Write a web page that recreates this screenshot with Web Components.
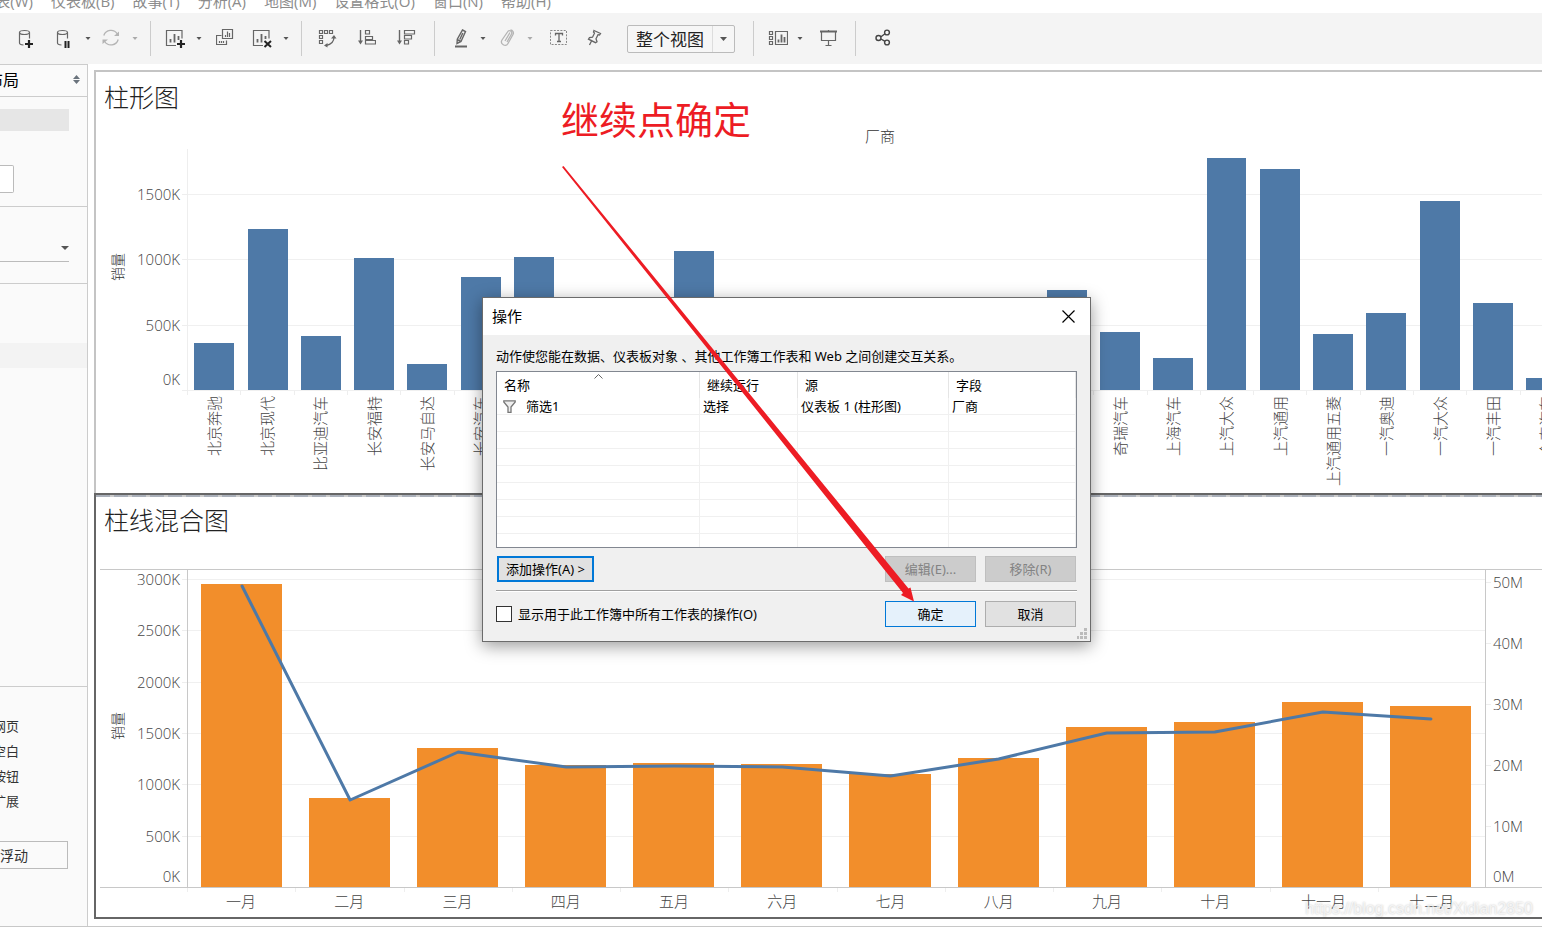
<!DOCTYPE html>
<html lang="zh-CN">
<head>
<meta charset="utf-8">
<title>仪表板 1</title>
<style>
html, body { margin: 0; height: 100%; overflow: hidden; background: #fff; }
body { font-family: "Open Sans", "Noto Sans CJK SC", sans-serif; color: #000; }
</style>
</head>
<body>
<app-window></app-window>
<script>
const define = (name, html, setup) => {
  const tpl = document.createElement('template');
  tpl.innerHTML = html;
  customElements.define(name, class extends HTMLElement {
    connectedCallback() {
      if (this.shadowRoot) return;
      this.attachShadow({ mode: 'open' }).appendChild(tpl.content.cloneNode(true));
      if (setup) setup(this, this.shadowRoot);
    }
  });
};

const CYL = '<g fill="none" stroke="#666" stroke-width="1.200"><ellipse cx="8.500" cy="4.500" rx="5" ry="2"/><path d="M3.500 4.500v10.500q0 1.800 4 2M13.500 4.500v6"/></g>';
const FRAME = '<path d="M11 17.500H1.500V2.500h15.500v8" fill="none" stroke="#666" stroke-width="1.200"/>';
const ICONS = {
  dbAdd: CYL + '<path d="M9 16h8M13 12v8" stroke="#222" stroke-width="2.200"/>',
  dbPause: CYL + '<path d="M11.500 13v7M14.500 13v7" stroke="#222" stroke-width="2"/>',
  refresh: '<g fill="none" stroke="#b4b4b4" stroke-width="1.300"><path d="M2.800 7.500a7.500 7.500 0 0 1 13.500-1.500M17.200 11.500a7.500 7.500 0 0 1-13.500 2"/></g><path d="M13 8h5V3.500zM7 11.500H1.500V16z" fill="#b4b4b4"/>',
  chartAdd: FRAME + '<path d="M5.500 14.500v-3.500M9.500 14.500V6M13.500 12V8" stroke="#666" stroke-width="1.800"/><path d="M12 16h8M16 12v8" stroke="#222" stroke-width="2.200"/>',
  duplicate: '<g fill="none" stroke="#666" stroke-width="1.200"><path d="M5.500 7.500h-5v9h10v-4"/><path d="M6.500 1.500h10v9h-10z"/><path d="M9.500 9V7M11.500 9V3.500M13.500 9V5M3.500 15v-2M5.500 15v-2M7.500 15v-2"/></g>',
  clear: FRAME + '<path d="M5.500 14.500v-3.500M9.500 14.500V6M13.500 11V8" stroke="#666" stroke-width="1.800"/><path d="M12.500 13l6.500 6M19 13l-6.500 6" stroke="#222" stroke-width="2"/>',
  swap: '<g fill="none" stroke="#666" stroke-width="1.200"><path d="M1.500 2.500h3v3h-3zM6.500 2.500h3v3h-3zM11.500 2.500h3v3h-3zM1.500 7.500h3v3h-3zM1.500 12.500h3v3h-3z"/><path d="M16 9q0 7-8 8.500" stroke-width="1.300"/></g><path d="M13 10.500l3-3.500 2.500 3.500zM9.500 15l-3.500 2.500 3.500 2z" fill="#666"/>',
  sortAsc: '<g fill="none" stroke="#666" stroke-width="1.200"><path d="M4.500 2v12" stroke-width="1.400"/><path d="M9.500 2.500h4v3.500h-4zM9.500 8.500h7v3h-7zM9.500 12.500h10v3.500h-10z"/></g><path d="M2 12.500h5l-2.500 4z" fill="#666"/>',
  sortDesc: '<g fill="none" stroke="#666" stroke-width="1.200"><path d="M3.500 2v12" stroke-width="1.400"/><path d="M8.500 2.500h10v3.500h-10zM8.500 7.500h7v3.500h-7zM8.500 12.500h4v3.500h-4z"/></g><path d="M1 12.500h5l-2.500 4z" fill="#666"/>',
  pen: '<g fill="none" stroke="#666" stroke-width="1.400"><path d="M11.500 2l3 1.500-4.500 10-4 2 .300-4.300zM6 11.500l4 2M11.800 5l-3 6.500"/></g><path d="M4 17.500h12v2H4z" fill="#666"/>',
  clip: '<path d="M7 13l5-8.500M9 14l4.500-8a2 2 0 0 0-4-2L4 12a3.300 3.300 0 0 0 6 3.500L15 6.500a3 3 0 0 0-2.500-4.500M12 4.500L7 13" fill="none" stroke="#b4b4b4" stroke-width="1.300"/>',
  text: '<rect x="1.500" y="2.500" width="16" height="14" fill="none" stroke="#888" stroke-dasharray="2 1.300"/><path d="M6.500 7.500v-2h7v2M10 5.500v8M8 13.500h4" fill="none" stroke="#666" stroke-width="1.300"/>',
  pin: '<path d="M9 2.500l6.500 3-1 1.500-1.500-.300-2 4 1 3-1.500 1-7-3.500 1-1.500 3-.500 2-4-1-1.200zM7 12l-2.500 5" fill="none" stroke="#666" stroke-width="1.300"/>',
  showMe: '<g fill="none" stroke="#666" stroke-width="1.200"><path d="M1.500 3.500h3v3h-3zM1.500 8.500h3v3h-3zM1.500 13.500h3v3h-3z"/><path d="M7.500 3.500h12v13h-12z"/></g><path d="M10.500 14.500v-3M13.500 14.500V6.500M16.500 14.500V9" stroke="#666" stroke-width="1.800"/>',
  present: '<path d="M1 3.500h17" stroke="#666" stroke-width="2"/><path d="M2.500 4v8.500h14V4M9.500 12.500v5M6.500 17.500h6M9.500 2v1" fill="none" stroke="#666" stroke-width="1.200"/>',
  share: '<g fill="none" stroke="#444" stroke-width="1.400"><circle cx="4.500" cy="10" r="2.500"/><circle cx="13" cy="4.500" r="2.400"/><circle cx="13" cy="14.500" r="2.400"/><path d="M7 8.800l4-3M7 11l4 2.300"/></g>'
};

define('tool-button', `<style>
  :host { display: block; flex: none; margin-bottom: 2px; }
  button { display: block; margin: 0; padding: 0; border: 0; background: none; width: 20px; height: 20px; }
  svg { display: block; }
  :host([caret]) button { width: 9px; }
</style><button type="button"></button>`, (el, root) => {
  const b = root.querySelector('button');
  b.setAttribute('aria-label', el.getAttribute('label') || '更多');
  el.style.marginLeft = el.getAttribute('gap') + 'px';
  if (el.hasAttribute('caret')) {
    const c = el.hasAttribute('dim') ? '#aaa' : '#555';
    b.innerHTML = `<svg width="9" height="20"><path d="M1.500 9h5l-2.500 3z" fill="${c}"/></svg>`;
  } else b.innerHTML = `<svg width="20" height="20">${ICONS[el.getAttribute('icon')]}</svg>`;
});

define('tool-separator', `<style>:host { display: block; flex: none; width: 1px; height: 35px; background: #ccc; }</style>`,
  el => { el.style.marginLeft = el.getAttribute('gap') + 'px'; });

define('view-select', `<style>
  :host { display: grid; flex: none; width: 108px; height: 28px; margin-left: 22px; }
  select, svg { grid-area: 1 / 1; }
  select { appearance: none; width: 100%; height: 100%; box-sizing: border-box; margin: 0; padding: 0 24px 0 8px; border: 1px solid #bbb; border-radius: 2px; background: #f6f6f6; font: 17px "Noto Sans CJK SC", sans-serif; color: #222; }
  svg { justify-self: end; pointer-events: none; }
</style><select aria-label="适合"><option>整个视图</option></select>
<svg width="23" height="28"><path d="M.500 1v26" stroke="#ddd"/><path d="M8 12h7l-3.500 4z" fill="#555"/></svg>`);

define('menu-bar', `<style>
  :host { display: flex; flex: none; align-items: flex-end; gap: 18px; height: 13px; overflow: hidden; background: #fff; }
  a { font-size: 15px; line-height: 24px; color: #8c8c8c; text-decoration: none; white-space: nowrap; }
  a:first-of-type { display: flex; justify-content: flex-end; width: 33px; }
</style><a href="#">表(W)</a><a href="#">仪表板(B)</a><a href="#">故事(T)</a><a href="#">分析(A)</a><a href="#">地图(M)</a><a href="#">设置格式(O)</a><a href="#">窗口(N)</a><a href="#">帮助(H)</a>`);

define('tool-bar', `<style>:host { display: flex; flex: none; align-items: center; height: 51px; background: #f4f4f4; }</style>
<tool-button gap="16" icon="dbAdd" label="新建数据源"></tool-button>
<tool-button gap="18" icon="dbPause" label="暂停自动更新"></tool-button>
<tool-button gap="10" caret></tool-button>
<tool-button gap="8" icon="refresh" label="运行更新"></tool-button>
<tool-button gap="10" caret dim></tool-button>
<tool-separator gap="10"></tool-separator>
<tool-button gap="14" icon="chartAdd" label="新建工作表"></tool-button>
<tool-button gap="10" caret></tool-button>
<tool-button gap="12" icon="duplicate" label="复制"></tool-button>
<tool-button gap="16" icon="clear" label="清除"></tool-button>
<tool-button gap="10" caret></tool-button>
<tool-separator gap="10"></tool-separator>
<tool-button gap="16" icon="swap" label="交换行和列"></tool-button>
<tool-button gap="18" icon="sortAsc" label="升序排序"></tool-button>
<tool-button gap="20" icon="sortDesc" label="降序排序"></tool-button>
<tool-separator gap="18"></tool-separator>
<tool-button gap="16" icon="pen" label="突出显示"></tool-button>
<tool-button gap="8" caret></tool-button>
<tool-button gap="10" icon="clip" label="组成员"></tool-button>
<tool-button gap="8" caret dim></tool-button>
<tool-button gap="14" icon="text" label="显示标记标签"></tool-button>
<tool-button gap="16" icon="pin" label="固定轴"></tool-button>
<view-select></view-select>
<tool-separator gap="18"></tool-separator>
<tool-button gap="14" icon="showMe" label="智能推荐"></tool-button>
<tool-button gap="8" caret></tool-button>
<tool-button gap="14" icon="present" label="演示模式"></tool-button>
<tool-separator gap="16"></tool-separator>
<tool-button gap="18" icon="share" label="共享"></tool-button>`);

define('side-panel', `<style>
  :host { display: flex; flex-direction: column; flex: none; width: 87px; border-top: 1px solid #ccc; border-right: 1px solid #ccc; background: #fafafa; overflow: hidden; }
  .head { display: flex; align-items: center; justify-content: space-between; box-sizing: border-box; height: 32px; padding: 0 7px 2px 0; border-bottom: 1px solid #ccc; }
  .cut { display: flex; justify-content: flex-end; width: 19px; white-space: nowrap; }
  .head .cut { font-size: 16px; line-height: 24px; }
  .size { height: 109px; border-bottom: 1px solid #ccc; }
  .device { width: 69px; height: 22px; margin-top: 12px; background: #e6e6e6; }
  .preview { display: block; box-sizing: border-box; width: 14px; height: 28px; margin: 34px 0 0; padding: 0; border: 1px solid #bbb; border-left: 0; border-radius: 0 2px 2px 0; background: #fff; }
  .fit { display: grid; height: 76px; border-bottom: 1px solid #ccc; align-content: start; }
  .fit select, .fit svg { grid-area: 1 / 1; margin-top: 27px; }
  .fit select { appearance: none; width: 69px; height: 28px; box-sizing: border-box; padding: 0; border: 0; border-bottom: 1px solid #bbb; border-radius: 0; background: none; }
  .fit svg { margin-left: 60px; }
  .sheets { flex: 1; border-bottom: 1px solid #ccc; }
  .row { height: 25px; margin-top: 59px; background: #f3f3f3; }
  .objects { padding: 27px 0; }
  .objects a { font-size: 13px; line-height: 25px; color: #333; text-decoration: none; }
  .float { display: flex; justify-content: flex-start; box-sizing: border-box; width: 68px; height: 28px; margin: 0 0 57px; padding: 0; border: 1px solid #bbb; border-left: 0; background: #fafafa; font: 14px/26px "Noto Sans CJK SC", sans-serif; color: #333; }
</style>
<div class="head"><span class="cut">布局</span><svg width="7" height="9"><path d="M0 4l3.500-4L7 4zM0 5h7L3.500 9z" fill="#6a737c"/></svg></div>
<div class="size"><div class="device"></div><button class="preview" type="button" aria-label="设备预览"></button></div>
<div class="fit"><select aria-label="大小"><option></option></select><svg width="9" height="28"><path d="M1 12h8l-4 4z" fill="#555"/></svg></div>
<div class="sheets"><div class="row"></div></div>
<nav class="objects"><a class="cut" href="#">网页</a><a class="cut" href="#">空白</a><a class="cut" href="#">按钮</a><a class="cut" href="#">扩展</a></nav>
<button class="float" type="button">浮动</button>`);

/* Value axis: each row ends on its gridline, sized by the row weights. */
define('value-axis', `<style>
  :host { display: grid; min-height: 0; font-size: 15px; font-weight: 300; color: #444; }
  div { display: flex; align-items: flex-end; justify-content: flex-end; gap: 2px; min-height: 0; }
  span { line-height: 20px; margin-bottom: -9px; }
  div:last-child span { margin-bottom: 2px; }
  div::after { content: ""; flex: none; width: 5px; height: 1px; background: #eee; }
  :host([side=right]) div { flex-direction: row-reverse; }
</style>`, (el, root) => {
  el.style.gridTemplateRows = el.getAttribute('rows').split(' ').map(r => `minmax(0, ${r}fr)`).join(' ');
  for (const t of el.getAttribute('labels').split(' ')) {
    const d = document.createElement('div'), s = document.createElement('span');
    s.textContent = t; d.append(s); root.append(d);
  }
});

/* Bars with gridlines behind them and an optional line in front. */
define('bar-plot', `<style>
  :host { display: grid; min-height: 0; border-left: 1px solid var(--edge, #eee); }
  .grid, .bars, svg { grid-area: 1 / 1; min-height: 0; min-width: 0; }
  .grid { display: grid; }
  .grid i { border-bottom: 1px solid #f0f0f0; }
  .bars { display: grid; grid-auto-flow: column; grid-auto-columns: minmax(0, 1fr); grid-template-rows: minmax(0, 1fr); align-items: end; margin-bottom: 1px; }
  .bars i { justify-self: start; margin-left: 12%; width: 75%; background: var(--bar); }
  svg { width: 100%; height: calc(100% - 1px); overflow: visible; }
</style><div class="grid"></div><div class="bars"></div>`, (el, root) => {
  const grid = root.querySelector('.grid'), bars = root.querySelector('.bars');
  const rows = el.getAttribute('rows').split(' '), span = +el.getAttribute('span');
  grid.style.gridTemplateRows = rows.map(r => `minmax(0, ${r}fr)`).join(' ');
  rows.forEach(() => grid.append(document.createElement('i')));
  const values = el.getAttribute('values').split(' ');
  values.forEach(v => {
    const b = document.createElement('i');
    b.style.height = (v / span * 100) + '%';
    bars.append(b);
  });
  if (el.hasAttribute('line')) {
    const pts = el.getAttribute('line').split(' ').map((v, i) => `${i * 10 + 5},${span - v}`).join(' ');
    root.innerHTML += `<svg viewBox="0 0 ${values.length * 10} ${span}" preserveAspectRatio="none"><polyline points="${pts}" fill="none" stroke="#4e79a7" stroke-width="3" stroke-linejoin="round" stroke-linecap="round" vector-effect="non-scaling-stroke"/></svg>`;
  }
});

define('category-axis', `<style>
  :host { display: grid; grid-auto-flow: column; grid-auto-columns: minmax(0, 1fr); font-size: 15px; font-weight: 300; color: #444; }
  div { display: flex; justify-content: center; align-items: flex-start; background: linear-gradient(#eee, #eee) 0 0 / 1px 4px no-repeat; white-space: nowrap; line-height: 26px; }
  :host([vertical]) div { padding-top: 5px; line-height: 20px; }
  :host([vertical]) span { writing-mode: vertical-rl; text-orientation: sideways; transform: rotate(180deg); }
</style>`, (el, root) => {
  for (const t of el.getAttribute('labels').split(',')) {
    const d = document.createElement('div');
    if (t) { const s = document.createElement('span'); s.textContent = t; d.append(s); }
    root.append(d);
  }
});

const CARD = `
  h2 { margin: 0; padding-left: 8px; font-size: 25px; font-weight: 300; line-height: 32px; color: #222; }
  .name { align-self: center; justify-self: center; margin-bottom: 6px; writing-mode: vertical-rl; text-orientation: sideways; transform: rotate(180deg); font-size: 14px; font-weight: 300; line-height: 20px; color: #333; }
`;

define('brand-chart', `<style>${CARD}
  :host { display: flex; flex-direction: column; min-height: 0; box-sizing: border-box; border: 2px solid #c4c4c4; border-width: 2px 0 0 2px; padding-top: 9px; overflow: hidden; }
  .chart { flex: 1; min-height: 0; display: grid; grid-template: 25px minmax(0, 1fr) 102px / 36px 51px minmax(0, 1fr); margin: 11px -31px 0 4px; }
  .field { grid-area: 1 / 3; text-align: center; font-size: 15px; font-weight: 300; line-height: 25px; color: #333; }
  .name { grid-area: 2 / 1; }
  value-axis { grid-area: 2 / 2; }
  bar-plot { grid-area: 2 / 3; --bar: #4e79a7; }
  category-axis { grid-area: 3 / 3; }
</style><h2>柱形图</h2>
<div class="chart"><div class="field">厂商</div><div class="name">销量</div>
<value-axis rows="46 65 66 65" labels="1500K 1000K 500K 0K"></value-axis>
<bar-plot rows="46 65 66 65" span="241" values="47 161 54 132 26 113 133 0 0 139 0 0 0 0 0 0 100 58 32 232 221 56 77 189 87 12"></bar-plot>
<category-axis vertical labels="北京奔驰,北京现代,比亚迪汽车,长安福特,长安马自达,长安汽车,,,,,,,,,,,,奇瑞汽车,上海汽车,上汽大众,上汽通用,上汽通用五菱,一汽奥迪,一汽大众,一汽丰田,众泰汽车"></category-axis>
</div>`);

define('month-chart', `<style>${CARD}
  :host { display: flex; flex-direction: column; min-height: 0; box-sizing: border-box; border: 2px solid #666; border-right: 0; overflow: hidden; }
  .grip { flex: none; height: 2px; margin-bottom: 7px; background: repeating-linear-gradient(90deg, #aab0ba 0 14px, #ccc 14px 18px); }
  .chart { flex: 1; min-height: 0; display: grid; grid-template: minmax(0, 1fr) 29px / 36px 51px minmax(0, 1fr) 56px; margin: 33px 0 0 4px; border-top: 1px solid #c8c8c8; }
  .base { grid-area: 1 / 1 / 2 / 5; border-bottom: 1px solid #c8c8c8; }
  .name { grid-area: 1 / 1; }
  .left { grid-area: 1 / 2; }
  bar-plot { grid-area: 1 / 3; --bar: #f28e2b; --edge: #c8c8c8; border-right: 1px solid #c8c8c8; }
  .right { grid-area: 1 / 4; }
  category-axis { grid-area: 2 / 3; }
</style><div class="grip"></div><h2>柱线混合图</h2>
<div class="chart"><div class="name">销量</div>
<value-axis class="left" rows="10 51 52 51 51 52 51" labels="3000K 2500K 2000K 1500K 1000K 500K 0K"></value-axis>
<bar-plot rows="10 51 52 51 51 52 51" span="317" values="303 89 139 122 124 123 113 129 160 165 185 181" line="301 87 135 120 121 120 111 128 154 155 175 168"></bar-plot>
<value-axis class="right" side="right" rows="13 61 61 61 61 61" labels="50M 40M 30M 20M 10M 0M"></value-axis>
<category-axis labels="一月,二月,三月,四月,五月,六月,七月,八月,九月,十月,十一月,十二月"></category-axis>
<div class="base"></div>
</div>`);

define('dialog-button', `<style>
  :host { display: block; flex: none; width: 91px; height: 26px; }
  button { width: 100%; height: 100%; box-sizing: border-box; margin: 0; padding: 0; border: 1px solid #adadad; background: #e1e1e1; font: 13px/20px "Noto Sans", "Noto Sans CJK SC", sans-serif; color: #000; white-space: nowrap; }
  :host([wide]) { width: 97px; }
  :host([wide]) button { border: 2px solid #0078d7; }
  :host([primary]) button { border-color: #0078d7; background: #e5f1fb; }
  button:disabled { background: #ccc; border-color: #bfbfbf; color: #838383; }
</style><button type="button"><slot></slot></button>`, (el, root) => {
  root.querySelector('button').disabled = el.hasAttribute('off');
});

define('actions-dialog', `<style>
  :host { display: block; box-sizing: border-box; width: 609px; border: 1px solid #6b6b6b; background: #f0f0f0; box-shadow: 0 4px 16px rgba(0,0,0,.4); font: 13px/20px "Noto Sans", "Noto Sans CJK SC", sans-serif; }
  header { display: flex; align-items: center; justify-content: space-between; box-sizing: border-box; height: 37px; padding: 0 15px 1px 9px; background: #fff; }
  h1 { margin: 0; font-size: 15px; font-weight: 400; }
  header button { width: 13px; height: 13px; margin: 0; padding: 0; border: 0; background: none; }
  header svg { display: block; }
  .body { padding: 11px 13px 14px; }
  p { margin: 0 0 5px; }
  .list { box-sizing: border-box; height: 177px; border: 1px solid #828790; background: #fff; overflow: hidden; }
  table { width: 100%; border-collapse: separate; border-spacing: 0; table-layout: fixed; }
  th, td { box-sizing: border-box; padding: 0 0 0 3px; font-weight: 400; text-align: left; white-space: nowrap; border-right: 1px solid #f0f0f0; }
  th { height: 26px; padding-left: 7px; border-color: #e5e5e5; }
  td { height: 17px; line-height: 16px; border-bottom: 1px solid #f0f0f0; }
  td:first-child span { display: flex; align-items: center; gap: 10px; padding-left: 3px; }
  th:first-child span { display: grid; grid-template-columns: 1fr auto 1fr; padding-right: 7px; }
  .sort { align-self: start; margin-top: -1px; }
  .actions, .bottom { display: flex; align-items: center; gap: 9px; padding-right: 1px; }
  .actions { padding-left: 1px; margin-top: 8px; }
  .actions dialog-button:nth-child(2) { margin-left: auto; }
  hr { margin: 8px 0 9px; border: 0; border-top: 1px solid #a0a0a0; border-bottom: 1px solid #fff; }
  label { display: flex; align-items: center; gap: 6px; margin-right: auto; }
  input { appearance: none; width: 16px; height: 16px; box-sizing: border-box; margin: 0; border: 1px solid #333; background: #fff; }
  .resize { position: absolute; right: 3px; bottom: 2px; }
</style>
<header><h1>操作</h1><button type="button" aria-label="关闭"><svg width="13" height="13"><path d="M.500.500l12 12M12.500.500l-12 12" stroke="#000" stroke-width="1.200"/></svg></button></header>
<div class="body">
<p>动作使您能在数据、仪表板对象 、其他工作簿工作表和 Web 之间创建交互关系。</p>
<div class="list"><table>
<colgroup><col style="width:203px"><col style="width:98px"><col style="width:151px"><col></colgroup>
<thead><tr><th><span>名称<svg class="sort" width="9" height="5"><path d="M.500 4.500l4-4 4 4" fill="none" stroke="#666"/></svg></span></th><th>继续运行</th><th>源</th><th>字段</th></tr></thead>
<tbody><tr><td><span><svg width="13" height="13"><path d="M.800.800h11.400v1.200L8 7v5.500H5V7L.800 2z" fill="#eee" stroke="#777" stroke-width="1.300"/></svg>筛选1</span></td><td>选择</td><td>仪表板 1 (柱形图)</td><td>厂商</td></tr>
<tr><td></td><td></td><td></td><td></td></tr><tr><td></td><td></td><td></td><td></td></tr><tr><td></td><td></td><td></td><td></td></tr><tr><td></td><td></td><td></td><td></td></tr><tr><td></td><td></td><td></td><td></td></tr><tr><td></td><td></td><td></td><td></td></tr><tr><td></td><td></td><td></td><td></td></tr><tr><td></td><td></td><td></td><td></td></tr></tbody>
</table></div>
<div class="actions"><dialog-button wide>添加操作(A) &gt;</dialog-button><dialog-button off>编辑(E)...</dialog-button><dialog-button off>移除(R)</dialog-button></div>
<hr>
<div class="bottom"><label><input type="checkbox">显示用于此工作簿中所有工作表的操作(O)</label><dialog-button primary>确定</dialog-button><dialog-button>取消</dialog-button></div>
</div>
<svg class="resize" width="10" height="11"><path d="M7 0h3v3H7zM7 4h3v3H7zM7 8h3v3H7zM3 4h3v3H3zM3 8h3v3H3zM0 8h2v3H0z" fill="#bbb"/></svg>`);

/* Red note with a tapered arrow that points at the confirm button. */
define('red-note', `<style>
  :host { display: block; color: #ed1c24; pointer-events: none; }
  strong { display: block; font: 400 38px/48px "Noto Sans CJK SC", sans-serif; white-space: nowrap; }
  svg { display: block; margin-top: 24px; overflow: visible; }
</style><strong>继续点确定</strong>
<svg width="353" height="436"><path d="M1 1L2.500 0L347.500 422.500L349.500 421.500L353 435.500L340 429L342 427Z" fill="#ed1c24"/></svg>`);

define('app-window', `<style>
  :host { display: flex; flex-direction: column; height: 100vh; position: relative; overflow: hidden; }
  main { flex: 1; min-height: 0; display: flex; border-bottom: 1px solid #c8c8c8; }
  .board { flex: 1; min-width: 0; display: grid; grid-template-rows: minmax(0, 423fr) minmax(0, 426fr); padding: 6px 0 7px 6px; }
  actions-dialog { position: absolute; left: 482px; top: 297px; }
  red-note { position: absolute; left: 561px; top: 94px; }
  .mark { position: absolute; right: 9px; bottom: 8px; font: 16px/20px "Liberation Sans", sans-serif; color: rgba(255,255,255,.7); text-shadow: 0 0 2px rgba(0,0,0,.25); pointer-events: none; }
</style>
<menu-bar></menu-bar>
<tool-bar></tool-bar>
<main><side-panel></side-panel><div class="board"><brand-chart></brand-chart><month-chart></month-chart></div></main>
<actions-dialog></actions-dialog>
<red-note></red-note>
<div class="mark">https://blog.csdn.net/Xidian2850</div>`);
</script>
</body>
</html>
